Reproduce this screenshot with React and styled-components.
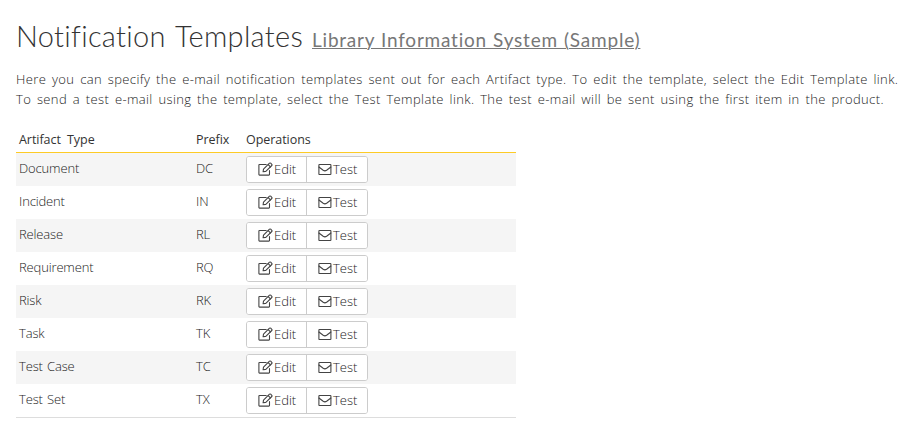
import React from 'react';
import styled, { createGlobalStyle } from 'styled-components';

const GlobalStyle = createGlobalStyle`
  * { box-sizing: border-box; }
  body {
    margin: 0;
    background: #fff;
    color: #1c1c1c;
    font: 300 13px/20px "Open Sans", "Noto Sans", sans-serif;
  }
`;

const Page = styled.main`
  padding: 15px 16px 0;
  white-space: nowrap;
`;

const Title = styled.h1`
  display: flex;
  align-items: baseline;
  gap: 9px;
  margin: 0;
  height: 42px;
  color: #333;
  font: 300 29px/41px Lato, sans-serif;
  letter-spacing: 0.3px;
  word-spacing: 2px;
`;

const ProductLink = styled.a`
  color: #777;
  font-size: 19px;
  font-weight: 400;
  letter-spacing: 0.78px;
  word-spacing: 0.5px;
  text-decoration: underline;
  text-decoration-thickness: 1px;
  text-underline-offset: 1px;
`;

const Intro = styled.p`
  margin: 12px 0 0;
`;

const IntroLine = styled.span`
  display: block;
  letter-spacing: ${(p) => p.$tracking}px;
  word-spacing: 2px;
`;

const Table = styled.div`
  width: 500px;
  margin-top: 19px;
  border-bottom: 1px solid #ddd;
`;

const Row = styled.div`
  display: grid;
  grid-template-columns: 177px 50px 1fr;
  height: 33px;
  background: ${(p) => (p.$striped ? '#f5f5f5' : '#fff')};
`;

const HeaderRow = styled(Row)`
  height: 25px;
  border-bottom: 1px solid #fdcb26;
  color: #333;
  font-weight: 400;
  font-size: 12.5px;
`;

const Cell = styled.div`
  padding: ${(p) => (p.$header ? '2px' : '5px')} 3px 0;
  letter-spacing: ${(p) => (p.$header ? '-0.05px' : '-0.15px')};
  word-spacing: ${(p) => (p.$header ? '3px' : '1px')};
`;

const ActionCell = styled.div`
  padding: 3px;
`;

const ButtonGroup = styled.div`
  display: flex;
  width: 122px;
  height: 27px;
  border: 1px solid #ccc;
  border-radius: 3px;
  background: #fff;
  overflow: hidden;
`;

const Button = styled.button`
  display: flex;
  width: 61px;
  align-items: center;
  padding: 0 0 1px 11px;
  border: 0;
  background: #fff;
  color: #1c1c1c;
  font: inherit;

  &:first-child {
    width: 59px;
  }

  & + & {
    border-left: 1px solid #ccc;
  }
`;

const Icon = styled.svg`
  width: ${(p) => p.$width}px;
  height: 14px;
  margin-right: 1px;
  flex: none;
  fill: none;
  stroke: #444;
  stroke-width: 1.1;
  stroke-linejoin: round;
  stroke-linecap: round;
`;

const EditIcon = () => (
  <Icon $width={15} viewBox="0 0 15 14">
    <path d="M8.2 2.5H1.5Q0.9 2.5 0.9 3.1V12.5Q0.9 13.1 1.5 13.1H10.8Q11.5 13.1 11.5 12.5V8.6" />
    <path d="M5.1 9.8L5.5 7.2L11.5 1.2Q12.1 0.7 12.7 1.2L13.8 2.3Q14.3 2.9 13.8 3.5L7.8 9.4Z" />
    <path d="M10.2 2.6L12.4 4.8" />
  </Icon>
);

const MailIcon = () => (
  <Icon $width={14} viewBox="0 0 14 14">
    <rect x="0.9" y="2.5" width="12" height="10" rx="0.6" />
    <path d="M0.9 5L5.2 8.3Q6.9 9.5 8.6 8.3L12.9 5" />
  </Icon>
);

const artifacts = [
  ['Document', 'DC'],
  ['Incident', 'IN'],
  ['Release', 'RL'],
  ['Requirement', 'RQ'],
  ['Risk', 'RK'],
  ['Task', 'TK'],
  ['Test Case', 'TC'],
  ['Test Set', 'TX'],
];

export default function App() {
  return (
    <Page>
      <GlobalStyle />
      <Title>
        Notification Templates
        <ProductLink>Library Information System (Sample)</ProductLink>
      </Title>
      <Intro>
        <IntroLine $tracking={0.38}>
          Here you can specify the e-mail notification templates sent out for each Artifact type. To edit the template, select the Edit Template link.
        </IntroLine>
        <IntroLine $tracking={0.37}>
          To send a test e-mail using the template, select the Test Template link. The test e-mail will be sent using the first item in the product.
        </IntroLine>
      </Intro>
      <Table>
        <HeaderRow>
          <Cell $header>Artifact Type</Cell>
          <Cell $header>Prefix</Cell>
          <Cell $header>Operations</Cell>
        </HeaderRow>
        {artifacts.map(([name, prefix], i) => (
          <Row key={prefix} $striped={i % 2 === 0}>
            <Cell>{name}</Cell>
            <Cell>{prefix}</Cell>
            <ActionCell>
              <ButtonGroup>
                <Button><EditIcon />Edit</Button>
                <Button><MailIcon />Test</Button>
              </ButtonGroup>
            </ActionCell>
          </Row>
        ))}
      </Table>
    </Page>
  );
}
